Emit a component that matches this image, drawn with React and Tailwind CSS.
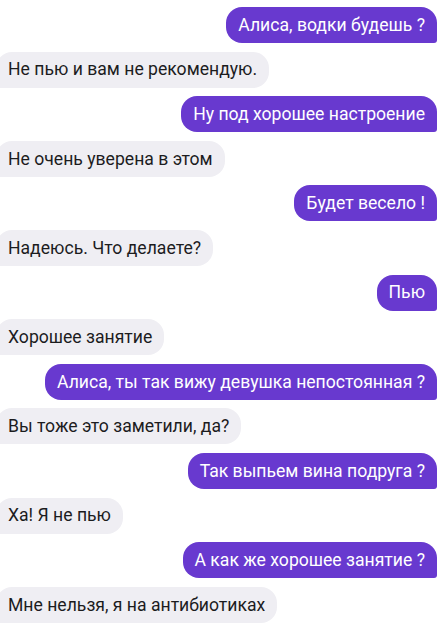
import React from 'react';

const messages = [
  { me: true, text: 'Алиса, водки будешь ?' },
  { me: false, text: 'Не пью и вам не рекомендую.' },
  { me: true, text: 'Ну под хорошее настроение' },
  { me: false, text: 'Не очень уверена в этом' },
  { me: true, text: 'Будет весело !' },
  { me: false, text: 'Надеюсь. Что делаете?' },
  { me: true, text: 'Пью' },
  { me: false, text: 'Хорошее занятие' },
  { me: true, text: 'Алиса, ты так вижу девушка непостоянная ?' },
  { me: false, text: 'Вы тоже это заметили, да?' },
  { me: true, text: 'Так выпьем вина подруга ?' },
  { me: false, text: 'Ха! Я не пью' },
  { me: true, text: 'А как же хорошее занятие ?' },
  { me: false, text: 'Мне нельзя, я на антибиотиках' },
];

const App = () => {
  return (
    <div
      className="w-[444px] h-[636px] overflow-hidden bg-white pt-[7px] flex flex-col gap-[8.6px]"
      style={{ fontFamily: 'Roboto, "Noto Sans", sans-serif' }}
    >
      {messages.map((m, idx) =>
        m.me ? (
          <div key={idx} className="flex justify-end pr-[7px]">
            <div className="h-9 flex items-center px-3 bg-[#6839cf] text-white text-[17.6px] rounded-[16px] rounded-br-[3px] whitespace-nowrap">
              {m.text}
            </div>
          </div>
        ) : (
          <div key={idx} className="flex justify-start -ml-[4px]">
            <div className="h-9 flex items-center px-3 bg-[#efeef3] text-[#1c1c1e] text-[17.6px] rounded-[16px] rounded-bl-[3px] whitespace-nowrap">
              {m.text}
            </div>
          </div>
        )
      )}
    </div>
  );
};

export default App;
